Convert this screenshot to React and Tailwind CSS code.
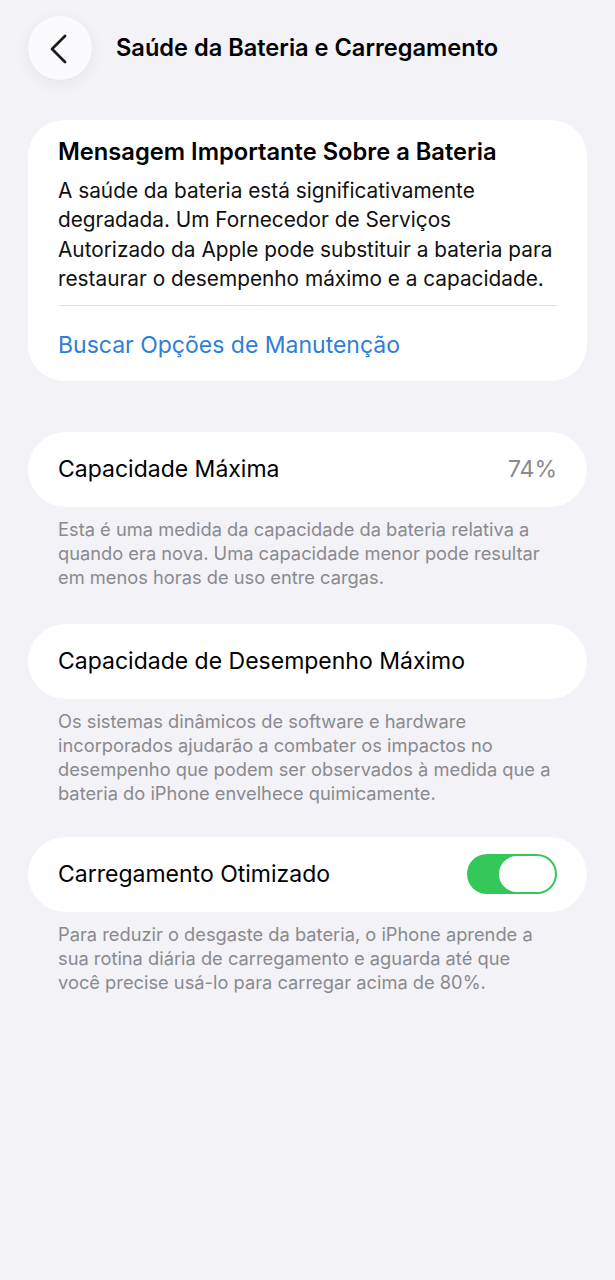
const font = { fontFamily: 'Inter, "Noto Sans", sans-serif' };

function Footer({ children }) {
  return (
    <p className="pl-[58px] pr-[55px] pt-[10px] text-[18.3px] leading-[24px] text-[#8a8a8e]">
      {children}
    </p>
  );
}

function Row({ children }) {
  return (
    <div className="mx-[28px] h-[75px] rounded-[38px] bg-white px-[30px] flex items-center justify-between">
      {children}
    </div>
  );
}

export default function App() {
  return (
    <div className="min-h-[1280px] w-[615px] bg-[#f2f2f7] text-black" style={font}>
      <div className="flex items-center h-[96px] pl-[28px]">
        <button className="w-[64px] h-[64px] rounded-full bg-[#fbfbfd] shadow-[0_4px_16px_rgba(0,0,0,0.06)] flex items-center justify-center">
          <svg width="64" height="64" viewBox="0 0 64 64" fill="none">
            <polyline points="37,20 24,33 37,46" stroke="#1c1c1e" strokeWidth="2.8" strokeLinecap="round" strokeLinejoin="round" />
          </svg>
        </button>
        <h1 className="ml-[24px] text-[23.6px] font-semibold">Saúde da Bateria e Carregamento</h1>
      </div>

      <div className="mx-[28px] mt-[24px] rounded-[36px] bg-white px-[30px] pt-[18px] pb-[22px]">
        <h2 className="text-[23.7px] font-semibold leading-[28px]">Mensagem Importante Sobre a Bateria</h2>
        <p className="mt-[10px] text-[20.8px] leading-[29.4px] text-[#111]">
          A saúde da bateria está significativamente degradada. Um Fornecedor de Serviços Autorizado da Apple pode substituir a bateria para restaurar o desempenho máximo e a capacidade.
        </p>
        <div className="mt-[11px] h-px bg-[#e2e2e6]" />
        <p className="mt-[25px] text-[23px] leading-[28px] text-[#2f7ed8]">Buscar Opções de Manutenção</p>
      </div>

      <div className="mt-[51px]">
        <Row>
          <span className="text-[23px]">Capacidade Máxima</span>
          <span className="text-[23px] text-[#8a8a8e]">74%</span>
        </Row>
        <Footer>
          Esta é uma medida da capacidade da bateria relativa a quando era nova. Uma capacidade menor pode resultar em menos horas de uso entre cargas.
        </Footer>
      </div>

      <div className="mt-[35px]">
        <Row>
          <span className="text-[23px]">Capacidade de Desempenho Máximo</span>
        </Row>
        <Footer>
          Os sistemas dinâmicos de software e hardware incorporados ajudarão a combater os impactos no desempenho que podem ser observados à medida que a bateria do iPhone envelhece quimicamente.
        </Footer>
      </div>

      <div className="mt-[32px]">
        <Row>
          <span className="text-[23px]">Carregamento Otimizado</span>
          <div className="w-[90px] h-[40px] rounded-full bg-[#34c759] p-[2px] flex justify-end">
            <div className="w-[56px] h-[36px] rounded-full bg-white" />
          </div>
        </Row>
        <Footer>
          Para reduzir o desgaste da bateria, o iPhone aprende a sua rotina diária de carregamento e aguarda até que
          <br />
          você precise usá-lo para carregar acima de 80%.
        </Footer>
      </div>
    </div>
  );
}
